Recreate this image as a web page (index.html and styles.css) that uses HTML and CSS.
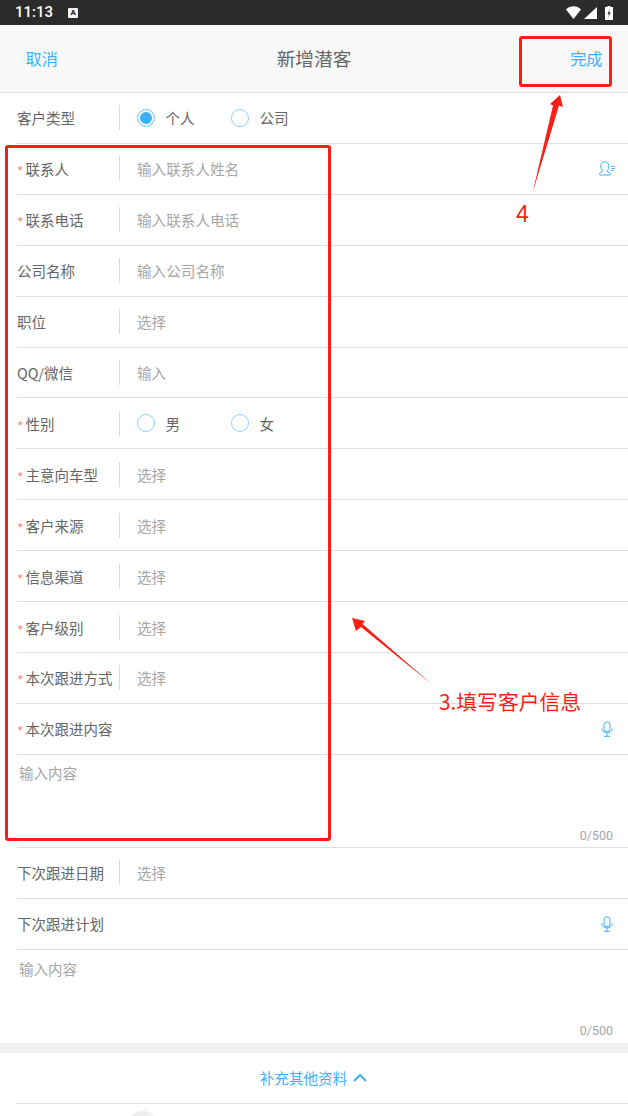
FILE: index.html
```html
<!DOCTYPE html>
<html lang="zh">
<head>
<meta charset="utf-8">
<title>新增潜客</title>
<link rel="stylesheet" href="styles.css">
</head>
<body>
<div class="page">
  <div class="status">
    <span class="time">11:13</span>
    <span class="a-badge">A</span>
    <span class="status-icons">
      <svg width="15" height="13" viewBox="0 0 16 12" preserveAspectRatio="none"><path d="M0 3.2C4.4-.9 11.6-.9 16 3.2L8 12z" fill="#fff"/></svg>
      <svg width="13" height="12" viewBox="0 0 13 13" preserveAspectRatio="none"><path d="M13 0v13H0z" fill="#fff"/></svg>
      <svg class="batt" width="8" height="14" viewBox="0 0 8 14"><path d="M2.5 0h3v1H8v13H0V1h2.500z" fill="#fff"/><path d="M4.800 3L2.500 8h1.500l-.8 3.500L5.800 6.500H4.200z" fill="#2b2b2b"/></svg>
    </span>
  </div>
  <header class="nav">
    <span class="nav-btn">取消</span>
    <span class="nav-title">新增潜客</span>
    <span class="nav-btn">完成</span>
  </header>

  <div class="row"><span class="label">客户类型</span><div class="val radios"><span class="radio on"></span><span class="opt">个人</span><span class="radio"></span><span class="opt">公司</span></div></div>
  <div class="row"><span class="label"><i>*</i>联系人</span><div class="val ph">输入联系人姓名</div>
    <svg class="end-icon" width="18" height="15" viewBox="0 0 17 15" fill="none" stroke="#3eb0fa" stroke-width="1"><path d="M4 9.500C2.500 8 2.300 6.500 2.300 5 2.300 2.500 4 .8 6.300.8S10.300 2.500 10.300 5c0 1.500-.2 3-1.700 4.500v1c1 .7 3 .8 3.400 2 .2.800 0 1.500-.5 1.500H1.500c-.6 0-.8-.7-.5-1.500.4-1.200 2.400-1.300 3-2z"/><path d="M12.500 5.500H16.500M12.500 7.500H16.500M12.500 9.500H15.500" stroke-width=".8"/></svg>
  </div>
  <div class="row"><span class="label"><i>*</i>联系电话</span><div class="val ph">输入联系人电话</div></div>
  <div class="row"><span class="label">公司名称</span><div class="val ph">输入公司名称</div></div>
  <div class="row"><span class="label">职位</span><div class="val ph">选择</div></div>
  <div class="row"><span class="label">QQ/微信</span><div class="val ph">输入</div></div>
  <div class="row"><span class="label"><i>*</i>性别</span><div class="val radios"><span class="radio"></span><span class="opt">男</span><span class="radio"></span><span class="opt">女</span></div></div>
  <div class="row"><span class="label"><i>*</i>主意向车型</span><div class="val ph">选择</div></div>
  <div class="row"><span class="label"><i>*</i>客户来源</span><div class="val ph">选择</div></div>
  <div class="row"><span class="label"><i>*</i>信息渠道</span><div class="val ph">选择</div></div>
  <div class="row"><span class="label"><i>*</i>客户级别</span><div class="val ph">选择</div></div>
  <div class="row"><span class="label"><i>*</i>本次跟进方式</span><div class="val ph">选择</div></div>
  <div class="row plain"><span class="label"><i>*</i>本次跟进内容</span>
    <svg class="end-icon mic" width="12" height="16" viewBox="0 0 12 16" fill="none" stroke="#3eb0fa"><rect x="3" y=".8" width="6" height="10" rx="3"/><path d="M.8 7.500c0 6 10.400 6 10.400 0M6 12.500V15M3 15.300H9"/></svg>
  </div>
  <div class="area"><span class="area-ph">输入内容</span><span class="count">0/500</span></div>
  <div class="row"><span class="label">下次跟进日期</span><div class="val ph">选择</div></div>
  <div class="row plain"><span class="label">下次跟进计划</span>
    <svg class="end-icon mic" width="12" height="16" viewBox="0 0 12 16" fill="none" stroke="#3eb0fa"><rect x="3" y=".8" width="6" height="10" rx="3"/><path d="M.8 7.500c0 6 10.400 6 10.400 0M6 12.500V15M3 15.300H9"/></svg>
  </div>
  <div class="area last"><span class="area-ph">输入内容</span><span class="count">0/500</span></div>
  <div class="gap"></div>
  <div class="more"><span>补充其他资料</span><svg width="14" height="9" viewBox="0 0 14 9" fill="none" stroke="#3eb0fa" stroke-width="2"><path d="M1 8l6-6 6 6"/></svg></div>
  <div class="tail"><span class="tail-dot"></span></div>

  <div class="mark mark-form"></div>
  <div class="mark mark-done"></div>
  <svg class="arrows" width="628" height="1116" viewBox="0 0 628 1116" fill="#fa1e14">
    <path d="M532.500 193L553 105.500 550 104 560 95 563 107 559 105.500z"/>
    <path d="M432 684.500L361 627 356 631 352 618 365 621 362.500 624z"/>
  </svg>
  <span class="note note-4">4</span>
  <span class="note note-3">3.填写客户信息</span>
</div>
</body>
</html>
```
FILE: styles.css
```css
* { box-sizing: border-box; }
html, body { margin: 0; padding: 0; background: #fff; }
body { font-family: "Noto Sans CJK SC", "Noto Sans", sans-serif; color: #666; }
.page { position: relative; width: 628px; height: 1116px; overflow: hidden; }

.status { height: 25px; background: #2b2b2b; display: flex; align-items: center; padding: 0 15px; color: #fff; }
.time { font: 500 15px/25px Roboto, sans-serif; }
.a-badge { margin-left: 15px; width: 10px; height: 10px; background: #f4f4f4; color: #222; border-radius: 1px; font: 700 8px/10px Roboto, sans-serif; text-align: center; }
.status-icons { margin-left: auto; display: flex; align-items: center; gap: 3px; }
.batt { margin-left: 5px; }

.nav { height: 68px; background: #f8f8f8; border-bottom: 1px solid #d9d9d9; display: flex; align-items: center; justify-content: space-between; padding: 0 25.500px 2px; }
.nav-btn { font-size: 16.200px; color: #3eb0fa; line-height: 20px; }
.nav-title { font-size: 18.700px; color: #666; line-height: 24px; }

.row { position: relative; height: 50.920px; margin-left: 17px; border-bottom: 1px solid #dedede; display: flex; align-items: center; }
.row.plain .label { border-right: 0; }
.label { width: 103px; flex: none; height: 25px; line-height: 25px; font-size: 14.500px; color: #666; border-right: 1px solid #d9d9d9; white-space: nowrap; }
.label i { display: inline-block; width: 8.500px; line-height: 14px; font-style: normal; color: #fb8a80; font-size: 14px; vertical-align: -2px; }
.val { padding-left: 17px; font-size: 14.600px; line-height: 25px; height: 25px; }
.ph { color: #a6a6a6; }
.radios { display: flex; align-items: center; color: #666; }
.radio { width: 18px; height: 18px; border: 1px solid #8ed0fb; border-radius: 50%; flex: none; }
.radio.on { background: #3eb0fa; box-shadow: inset 0 0 0 2px #fff; }
.opt { width: 76px; padding-left: 10.500px; }
.end-icon { margin-left: auto; margin-right: 12px; }
.end-icon.mic { margin-right: 15px; }

.area { position: relative; height: 93px; margin-left: 17px; border-bottom: 1px solid #dedede; padding: 5px 0 0 2px; }
.area.last { height: 93px; border-bottom: 0; padding-top: 6px; }
.area-ph { font-size: 14.500px; line-height: 22px; color: #a6a6a6; }
.count { position: absolute; right: 15px; bottom: 3px; font: 12.500px/16px Roboto, sans-serif; color: #a6a6a6; }
.area.last .count { bottom: 4px; }
.gap { height: 10px; background: #eff0f2; }
.more { height: 51px; margin-left: 17px; border-bottom: 1px solid #dedede; display: flex; align-items: center; justify-content: center; gap: 6px; padding: 0 18px 0 0; color: #3eb0fa; font-size: 14.600px; }
.tail { padding: 7px 0 0 127px; }
.tail-dot { display: block; width: 32px; height: 32px; border-radius: 50%; background: #eee; }

.mark { position: absolute; border: 3px solid #fa1e14; border-radius: 3px; }
.mark-form { left: 5px; top: 145px; width: 326px; height: 696px; }
.mark-done { left: 519px; top: 36px; width: 93px; height: 51px; }
.arrows { position: absolute; left: 0; top: 0; }
.note { position: absolute; color: #fa1e14; white-space: nowrap; }
.note-4 { left: 516px; top: 201px; font: 23px/26px "Liberation Sans", sans-serif; }
.note-3 { left: 439px; top: 686px; font-size: 20.800px; line-height: 30px; }
```
